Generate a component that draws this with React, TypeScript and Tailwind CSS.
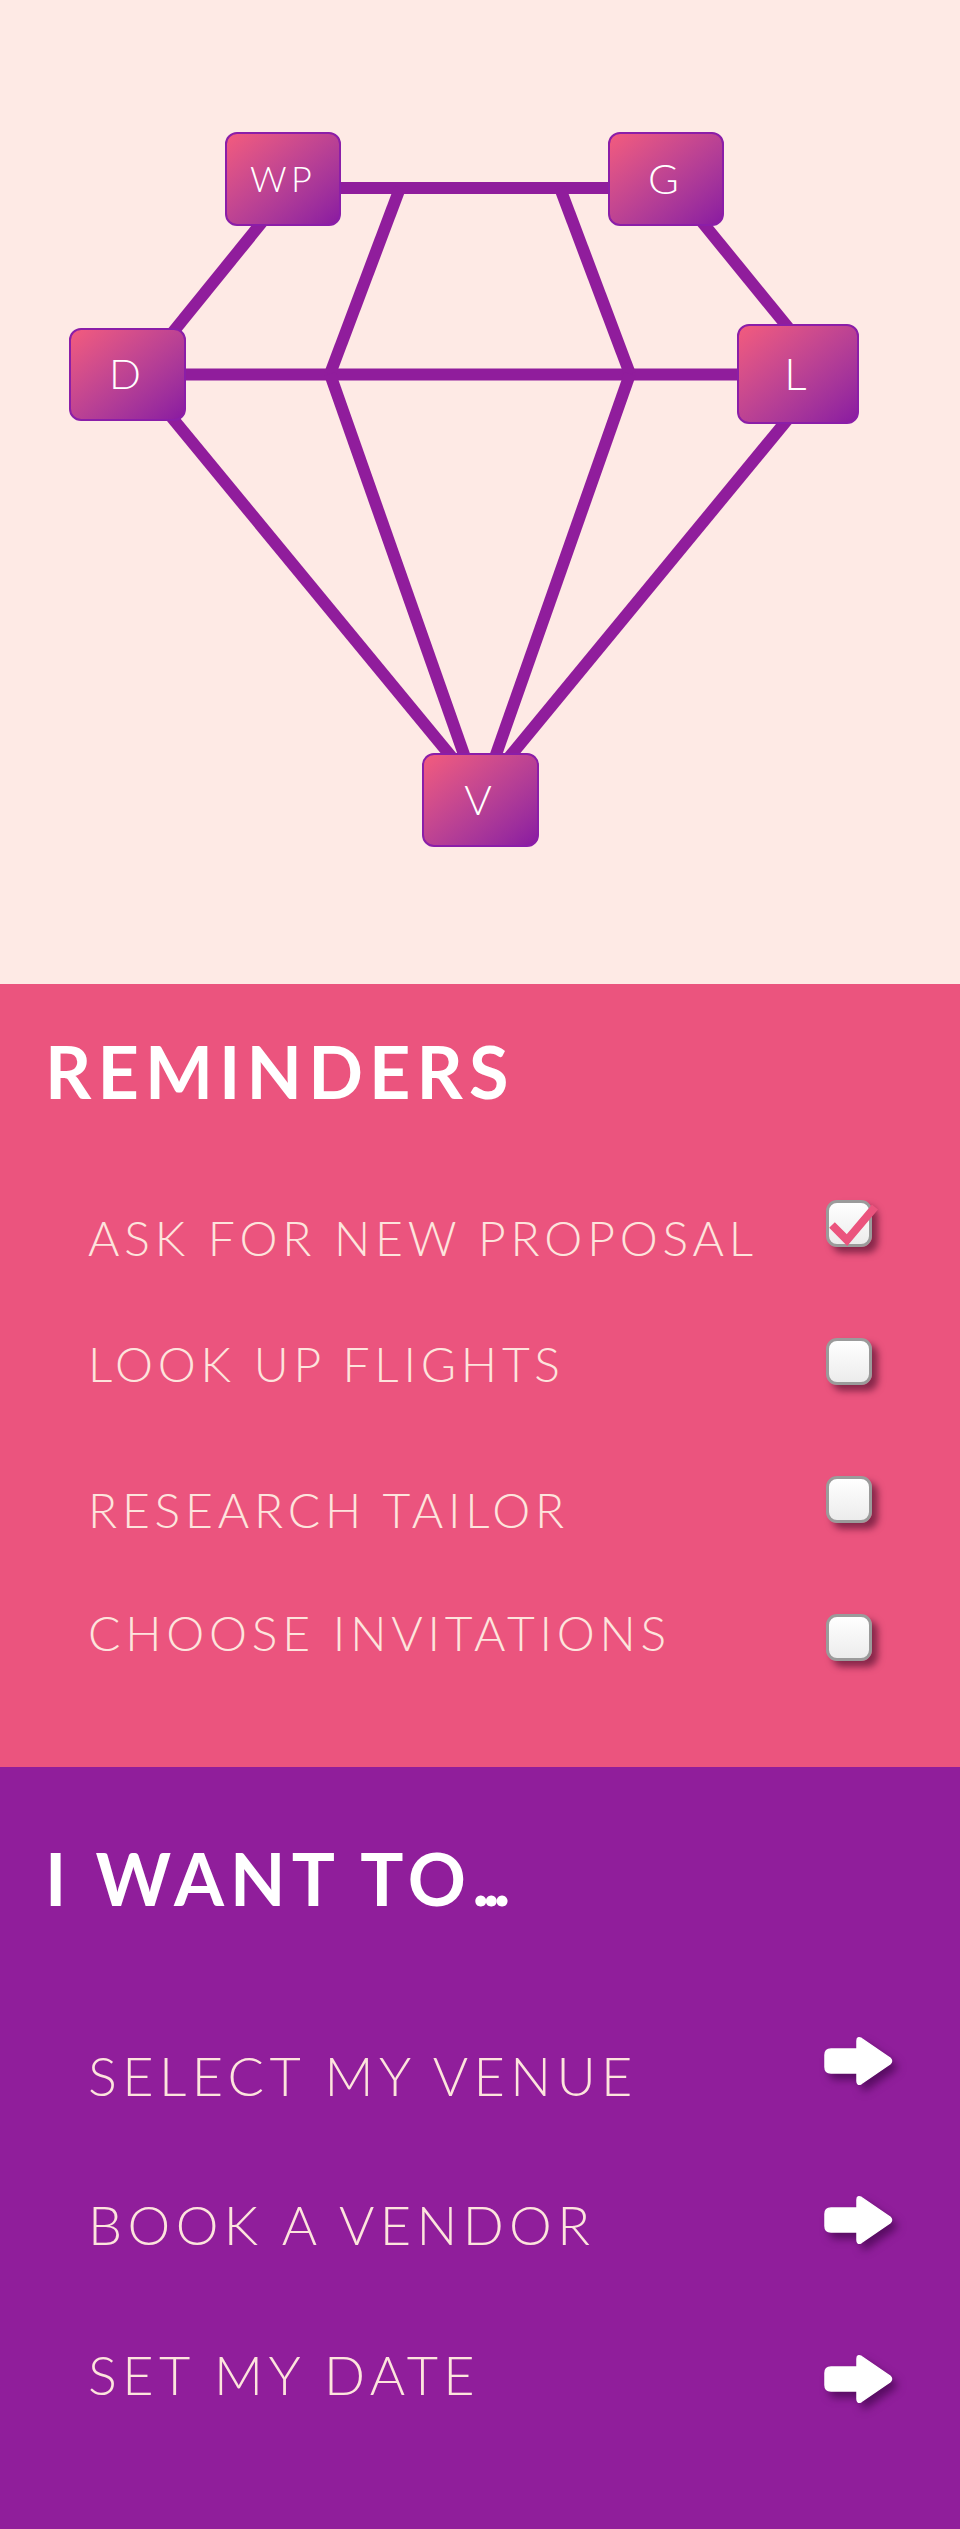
import React from "react";

const font = { fontFamily: '"Lato", "Liberation Sans", sans-serif' };

const reminders = [
  { label: "ASK FOR NEW PROPOSAL", checked: true, pad: "pt-[19px]" },
  { label: "LOOK UP FLIGHTS", checked: false, pad: "pt-[7px]" },
  { label: "RESEARCH TAILOR", checked: false, pad: "pt-[15px]" },
  { label: "CHOOSE INVITATIONS", checked: false, pad: "pt-0" },
];

const actions = [
  { label: "SELECT MY VENUE", pad: "pt-[19px]" },
  { label: "BOOK A VENDOR", pad: "pt-[9px]" },
  { label: "SET MY DATE", pad: "pt-0" },
];

// node boxes of the diamond diagram
const nodes = [
  { label: "WP", cls: "left-[225px] top-[132px] h-[94px] w-[116px] text-[36px]" },
  { label: "G", cls: "left-[608px] top-[132px] h-[94px] w-[116px] text-[42px]" },
  { label: "D", cls: "left-[69px] top-[328px] h-[93px] w-[117px] text-[42px]" },
  { label: "L", cls: "left-[737px] top-[324px] h-[100px] w-[122px] text-[44px]" },
  { label: "V", cls: "left-[422px] top-[753px] h-[94px] w-[117px] text-[42px]" },
];

const lines = [
  [283, 188, 666, 188],
  [128, 374.5, 798, 374.5],
  [297, 179, 139, 374],
  [667, 179, 826, 374],
  [400, 188, 330, 374],
  [560, 188, 630, 374],
  [330, 374, 480, 800],
  [630, 374, 480, 800],
  [136, 374, 487, 800],
  [825, 374, 474, 800],
];

function Diagram() {
  return (
    <div className="relative h-[984px] bg-[#feeae5]">
      <svg className="absolute inset-0" width="960" height="984" viewBox="0 0 960 984">
        {lines.map(([x1, y1, x2, y2], i) => (
          <line key={i} x1={x1} y1={y1} x2={x2} y2={y2} stroke="#901d9c" strokeWidth="12" />
        ))}
      </svg>
      {nodes.map((n) => (
        <div
          key={n.label}
          className={`absolute flex items-center justify-center rounded-[12px] border-2 border-[#8b1ea8] bg-linear-to-br from-[#f35b7d] to-[#8a19a1] pb-[3px] font-light leading-none tracking-[0.12em] text-white ${n.cls}`}
        >
          {n.label}
        </div>
      ))}
    </div>
  );
}

function Checkbox({ checked }: { checked: boolean }) {
  return (
    <div className="relative mt-[5px] h-[47px] w-[46px] rounded-[11px] border-[3px] border-[#9b9b9b] bg-linear-to-b from-white to-[#ececec] shadow-[6px_6px_7px_rgba(70,10,40,0.6)]">
      {checked && (
        <svg className="absolute -left-[3px] -top-[3px] overflow-visible" width="52" height="52" viewBox="0 0 52 52">
          <path d="M6 25 L21 40 L49 7" fill="none" stroke="#eb547e" strokeWidth="8" />
        </svg>
      )}
    </div>
  );
}

function Arrow() {
  return (
    <svg
      className="mt-[5px] drop-shadow-[5px_6px_4px_rgba(50,0,60,0.6)]"
      width="70"
      height="52"
      viewBox="0 0 70 52"
    >
      <path
        d="M7 14 H33 V6 Q33 1 37.5 3.5 L66 23 Q69 26 66 29 L37.5 48.5 Q33 51 33 46 V38 H7 Q1 38 1 32 V20 Q1 14 7 14 Z"
        fill="white"
        stroke="white"
        strokeWidth="1.5"
        strokeLinejoin="round"
      />
    </svg>
  );
}

export default function App() {
  return (
    <div className="w-[960px]" style={font}>
      <Diagram />

      <section className="bg-[#eb547e] pb-[20px] pt-[51px]">
        <h2 className="pl-[45px] text-[72px] font-bold leading-none tracking-[0.085em] text-white">REMINDERS</h2>
        <div className="mt-[88px]">
          {reminders.map((r) => (
            <div key={r.label} className="flex h-[138px] items-start justify-between pl-[88px] pr-[88px]">
              <span className={`${r.pad} text-[48px] font-light leading-none tracking-[0.1em] text-[#fde4dd]`}>
                {r.label}
              </span>
              <Checkbox checked={r.checked} />
            </div>
          ))}
        </div>
      </section>

      <section className="bg-[#901e9b] pb-[22px] pt-[75px]">
        <h2 className="pl-[45px] text-[72px] font-bold leading-none tracking-[0.085em] text-white">
          I WANT TO<span className="tracking-[-0.09em]">...</span>
        </h2>
        <div className="mt-[116px]">
          {actions.map((a) => (
            <div key={a.label} className="flex h-[159px] items-start justify-between pl-[88px] pr-[66px]">
              <span className={`${a.pad} text-[54px] font-light leading-none tracking-[0.1em] text-[#fde4dd]`}>
                {a.label}
              </span>
              <Arrow />
            </div>
          ))}
        </div>
      </section>
    </div>
  );
}
